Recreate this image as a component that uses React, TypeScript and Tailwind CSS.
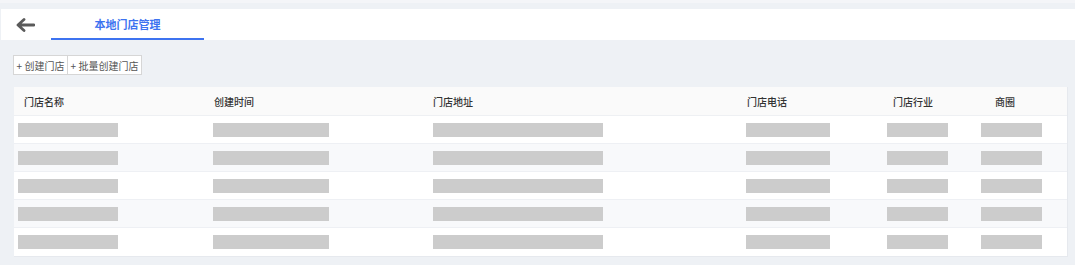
import React from "react";

const cols = [
  { w: "w-[199px]", th: "pl-[10px]", bar: "ml-[4px] w-[100px]" },
  { w: "w-[220px]", th: "pl-[1px]", bar: "ml-0 w-[116px]" },
  { w: "w-[313px]", th: "pl-0", bar: "ml-0 w-[170px]" },
  { w: "w-[141px]", th: "pl-[1px]", bar: "ml-0 w-[84px]" },
  { w: "w-[94px]", th: "pl-[6px]", bar: "ml-0 w-[61px]" },
  { w: "w-[87px]", th: "pl-[14px]", bar: "ml-0 w-[61px]" },
];

const headers = ["门店名称", "创建时间", "门店地址", "门店电话", "门店行业", "商圈"];

export default function App() {
  return (
    <div
      className="w-[1075px] h-[265px] bg-[#eef1f5] overflow-hidden"
      style={{ fontFamily: '"Noto Sans CJK SC", "Noto Sans", sans-serif' }}
    >
      <div className="h-[3px] bg-[#f4f5f8]" />
      <div className="h-[6px]" />
      <div className="ml-[1px] h-[31px] bg-white flex items-stretch">
        <div className="w-[50px] flex items-center pl-[15px]">
          <svg width="19" height="14" viewBox="0 0 19 14" fill="none">
            <path d="M18 7H2.5M8 1.5L2 7l6 5.5" stroke="#5a5a5a" strokeWidth="2.8" strokeLinecap="round" strokeLinejoin="round" />
          </svg>
        </div>
        <div className="w-[153px] flex items-center justify-center border-b-2 border-[#3d73f0] text-[11px] font-semibold text-[#3d73f0] pt-[1px]">
          本地门店管理
        </div>
      </div>
      <div className="flex mt-[15px] ml-[13px]">
        <div className="w-[55px] h-[20px] flex items-center justify-center border border-[#d6d6d6] bg-white text-[10px] text-[#555] whitespace-pre">
          {"+ 创建门店"}
        </div>
        <div className="w-[74px] h-[20px] flex items-center justify-center border border-l-0 border-[#d6d6d6] bg-white text-[10px] text-[#555] whitespace-pre">
          {"+ 批量创建门店"}
        </div>
      </div>
      <div className="mt-[12px] ml-[14px] w-[1054px] bg-white border-b border-r border-[#e6e9ee]">
        <div className="flex h-[29px] items-center bg-[#fafafa] border-b border-[#eef0f3] text-[10px] font-medium text-[#333]">
          {headers.map((h, i) => (
            <div key={i} className={`${cols[i].w} ${cols[i].th} shrink-0`}>
              {h}
            </div>
          ))}
        </div>
        {[0, 1, 2, 3, 4].map((r) => (
          <div
            key={r}
            className={`flex h-[28px] items-center ${r % 2 === 1 ? "bg-[#f8f9fb]" : "bg-white"} ${r < 4 ? "border-b border-[#eef0f4]" : ""}`}
          >
            {cols.map((c, i) => (
              <div key={i} className={`${c.w} flex shrink-0`}>
                <div className={`${c.bar} h-[14px] bg-[#cccccc]`} />
              </div>
            ))}
          </div>
        ))}
      </div>
    </div>
  );
}
